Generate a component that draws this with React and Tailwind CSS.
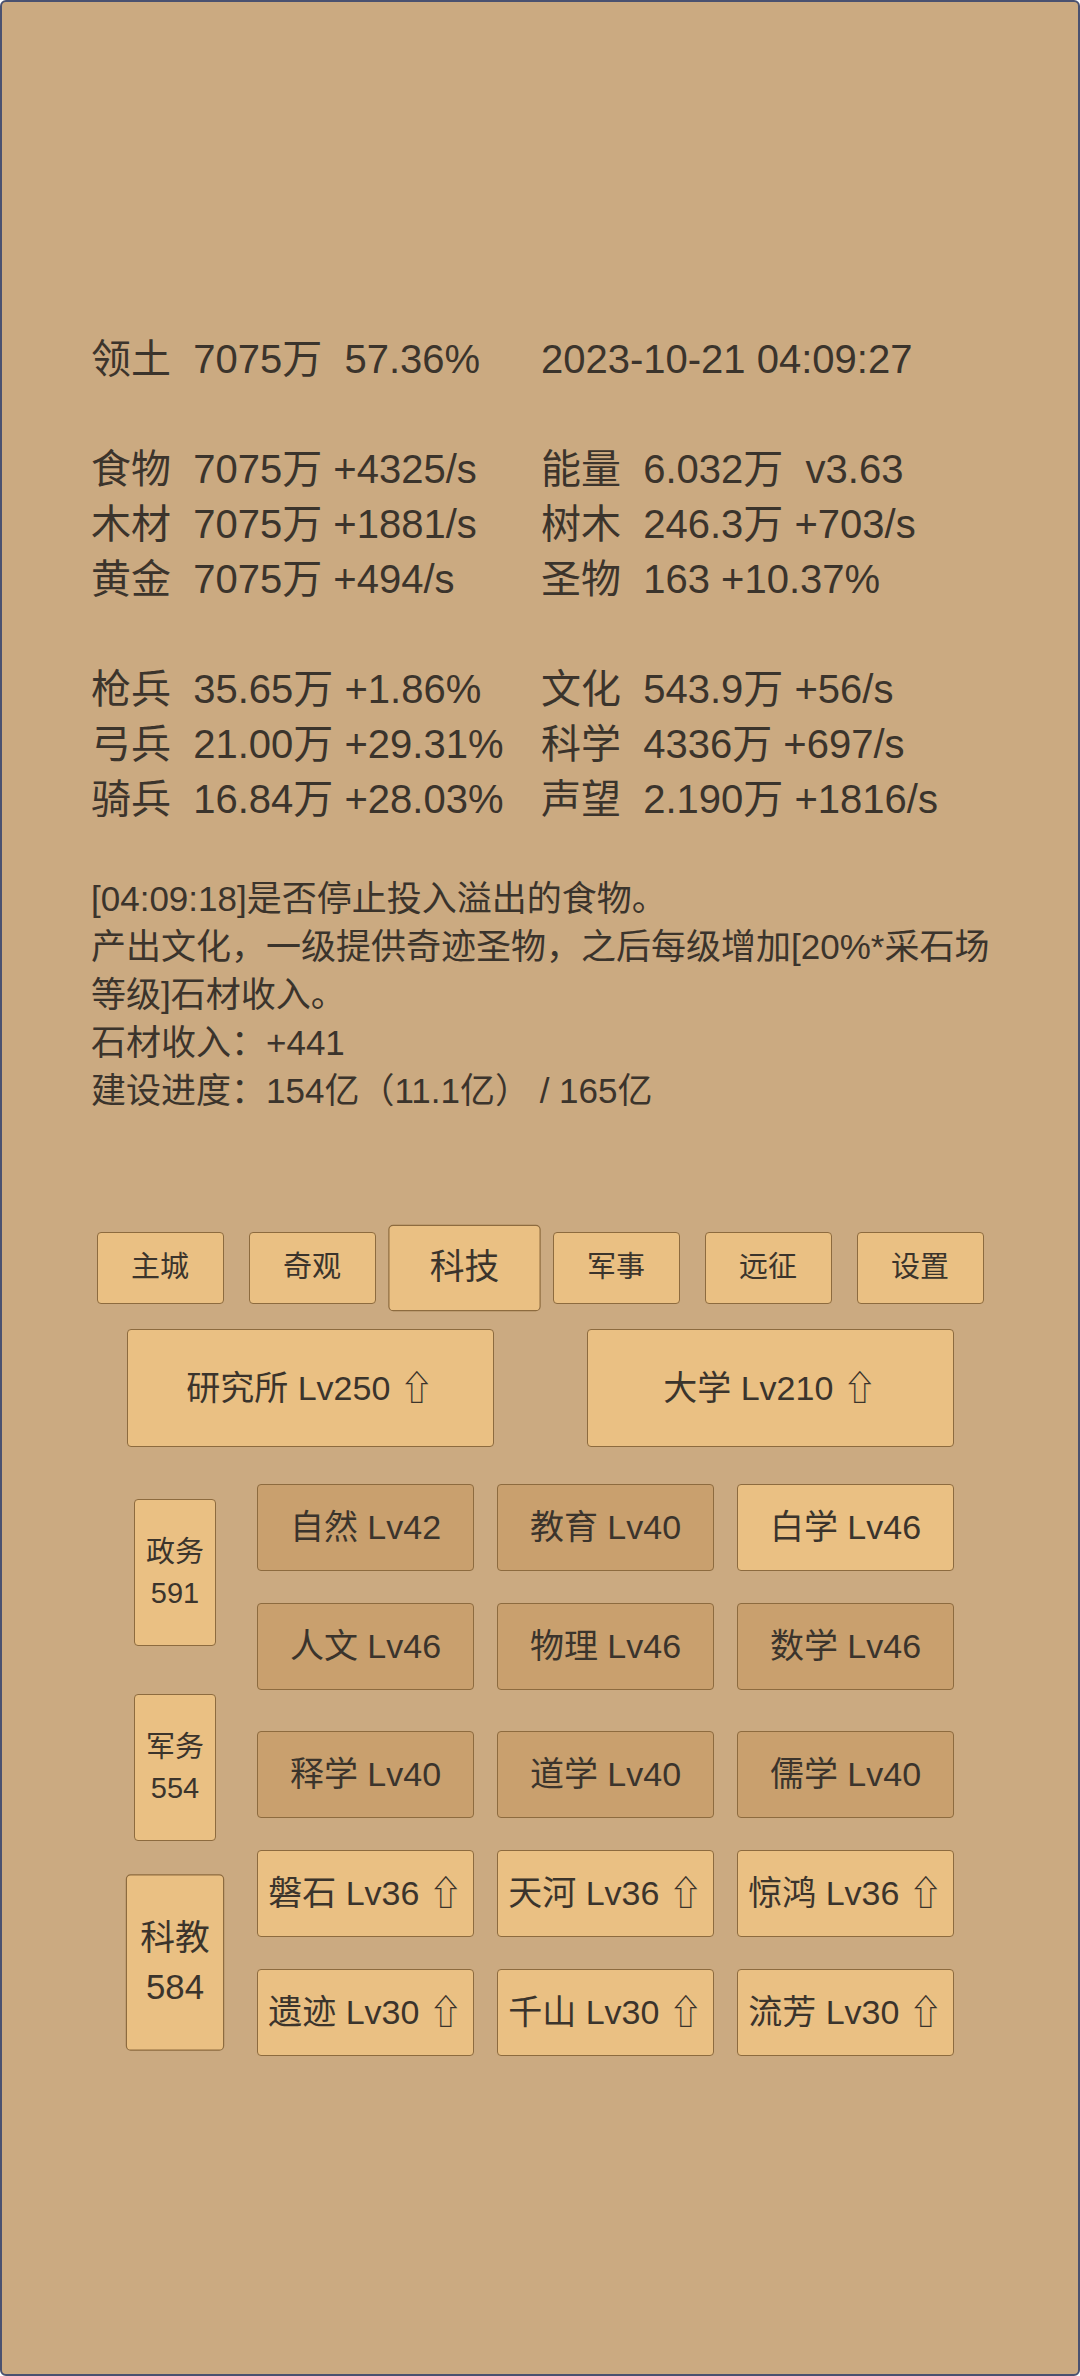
import React from 'react';

const stats = [
  ['领土  7075万  57.36%', '2023-10-21 04:09:27'],
  null,
  ['食物  7075万 +4325/s', '能量  6.032万  v3.63'],
  ['木材  7075万 +1881/s', '树木  246.3万 +703/s'],
  ['黄金  7075万 +494/s', '圣物  163 +10.37%'],
  null,
  ['枪兵  35.65万 +1.86%', '文化  543.9万 +56/s'],
  ['弓兵  21.00万 +29.31%', '科学  4336万 +697/s'],
  ['骑兵  16.84万 +28.03%', '声望  2.190万 +1816/s'],
];

const tabs = ['主城', '奇观', '科技', '军事', '远征', '设置'];

const sides = [
  { name: '政务', num: 591 },
  { name: '军务', num: 554 },
  { name: '科教', num: 584, active: true },
];

const techRows = [
  [
    { t: '自然 Lv42', dark: true },
    { t: '教育 Lv40', dark: true },
    { t: '白学 Lv46' },
  ],
  [
    { t: '人文 Lv46', dark: true },
    { t: '物理 Lv46', dark: true },
    { t: '数学 Lv46', dark: true },
  ],
  [
    { t: '释学 Lv40', dark: true },
    { t: '道学 Lv40', dark: true },
    { t: '儒学 Lv40', dark: true },
  ],
  [
    { t: '磐石 Lv36 ⇧' },
    { t: '天河 Lv36 ⇧' },
    { t: '惊鸿 Lv36 ⇧' },
  ],
  [
    { t: '遗迹 Lv30 ⇧' },
    { t: '千山 Lv30 ⇧' },
    { t: '流芳 Lv30 ⇧' },
  ],
];

const btn = 'flex items-center justify-center border-[1.5px] border-[#8d6b3f] rounded-[4px]';

const App = () => {
  return (
    <div className="w-[1080px] h-[2376px] border-2 border-[#4a5170] rounded-[6px] bg-[#cbaa81] text-[#3b342c] font-['Liberation_Sans','Noto_Sans_CJK_SC','DejaVu_Sans',sans-serif] overflow-hidden">
      {/* 数据 */}
      <div className="pl-[89px] pt-[330px]">
        <div className="text-[40px] leading-[55px]">
          {stats.map((row, i) =>
            row ? (
              <div key={i} className="grid grid-cols-[450px_450px] whitespace-pre">
                <span>{row[0]}</span>
                <span>{row[1]}</span>
              </div>
            ) : (
              <div key={i} className="h-[55px]" />
            )
          )}
        </div>

        <div className="mt-[48px] w-[910px] text-[35px] leading-[48px]">
          <p>[04:09:18]是否停止投入溢出的食物。</p>
          <p>产出文化，一级提供奇迹圣物，之后每级增加[20%*采石场等级]石材收入。</p>
          <p>石材收入：+441</p>
          <p>建设进度：154亿（11.1亿） / 165亿</p>
        </div>
      </div>

      {/* 标签页 */}
      <div className="mt-[117px] flex justify-center gap-[25px]">
        {tabs.map((t) => (
          <div
            key={t}
            className={`${btn} w-[127px] h-[72px] bg-[#eac083] text-[29px] ${t === '科技' ? 'scale-[1.2]' : ''}`}
          >
            {t}
          </div>
        ))}
      </div>

      <div className="mt-[25px] flex justify-center gap-[93px]">
        <div className={`${btn} w-[367px] h-[118px] bg-[#eac083] text-[34px]`}>研究所 Lv250 ⇧</div>
        <div className={`${btn} w-[367px] h-[118px] bg-[#eac083] text-[34px]`}>大学 Lv210 ⇧</div>
      </div>

      {/* 科技列表 */}
      <div className="mt-[37px] pl-[132px] flex items-start gap-[41px]">
        <div className="mt-[15px] flex flex-col gap-[48px]">
          {sides.map((s) => (
            <div
              key={s.name}
              className={`${btn} flex-col w-[82px] h-[147px] bg-[#eac083] text-[29px] leading-[41px] ${s.active ? 'scale-[1.2]' : ''}`}
            >
              <span>{s.name}</span>
              <span>{s.num}</span>
            </div>
          ))}
        </div>

        <div className="flex flex-col">
          {techRows.map((row, i) => (
            <div
              key={i}
              className={`flex gap-[23px] ${i === 0 ? '' : i === 2 ? 'mt-[41px]' : 'mt-[32px]'}`}
            >
              {row.map((c) => (
                <div
                  key={c.t}
                  className={`${btn} w-[217px] h-[87px] text-[34px] whitespace-pre ${c.dark ? 'bg-[#c9a06e]' : 'bg-[#eac083]'}`}
                >
                  {c.t}
                </div>
              ))}
            </div>
          ))}
        </div>
      </div>
    </div>
  );
};

export default App;
